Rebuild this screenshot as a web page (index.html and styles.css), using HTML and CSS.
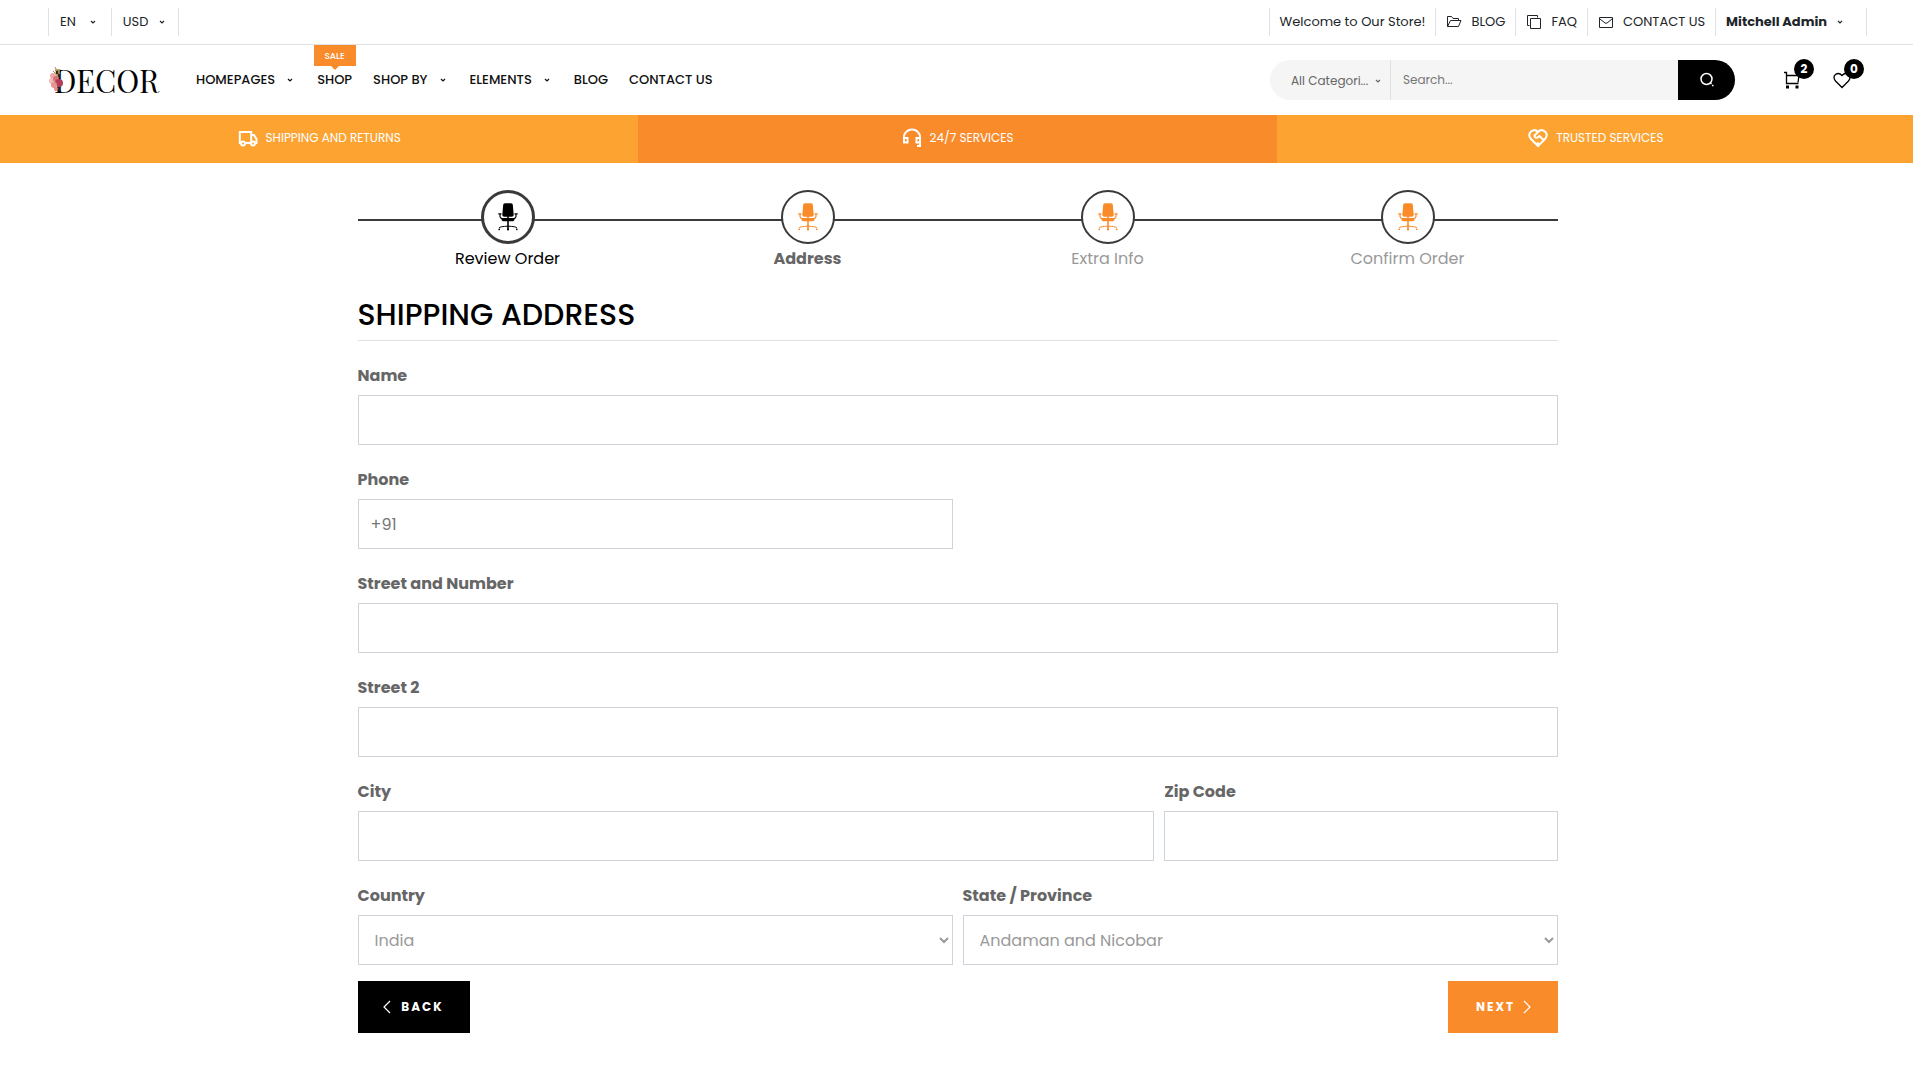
FILE: index.html
```html
<!DOCTYPE html>
<html lang="en">
<head>
<meta charset="utf-8">
<meta name="viewport" content="width=device-width, initial-scale=1">
<title>Shipping Address | Decor</title>
<link rel="stylesheet" href="styles.css">
</head>
<body>
<svg class="sprite" aria-hidden="true">
  <symbol id="caret" viewBox="0 0 6 6"><path d="M1 2l2 2 2-2" fill="none" stroke="currentColor" stroke-width="1.2"/></symbol>
  <symbol id="chair" viewBox="0 0 20 28">
    <path d="M7 .3h6q1.600 0 1.800 1.500l.9 9.900q0 2-2 2H6.300q-2 0-2-2l.9-9.900Q5.400.3 7 .3z" fill="currentColor"/>
    <path d="M3.500 15h13v1.300q0 1.900-1.700 1.900H5.200q-1.700 0-1.700-1.900z" fill="currentColor"/>
    <path d="M9.200 13h1.600v13H9.200z" fill="currentColor"/>
    <path d="M.3 10.800h3.200M16.500 10.800h3.200M2 11v2.500q.2 1.800 2 2.200M18 11v2.500q-.2 1.800-2 2.200" fill="none" stroke="currentColor" stroke-width="1.2"/>
    <path d="M1 25q1-1.600 9-1.800 8 .2 9 1.800" fill="none" stroke="currentColor" stroke-width="1"/>
    <circle cx="1.200" cy="26.300" r=".9" fill="currentColor"/><circle cx="10" cy="26.500" r="1.100" fill="currentColor"/><circle cx="18.800" cy="26.300" r=".9" fill="currentColor"/>
  </symbol>
</svg>

<header>
  <div class="topbar">
    <div class="top-group">
      <button class="top-item top-lang" type="button">EN <svg class="caret"><use href="#caret"/></svg></button>
      <button class="top-item top-currency" type="button">USD <svg class="caret"><use href="#caret"/></svg></button>
    </div>
    <div class="top-group">
      <span class="top-item">Welcome to Our Store!</span>
      <a class="top-item" href="#"><svg class="top-icon" viewBox="0 0 16 16"><path d="M1.500 12.500v-10h4l1.500 2h5.500v2M1.500 12.500l3-6h10.500l-2.500 6z"/></svg>BLOG</a>
      <a class="top-item" href="#"><svg class="top-icon" viewBox="0 0 16 16"><path d="M4.500 4.500h10v10h-10zM3.500 11.500h-2v-10h10v2"/></svg>FAQ</a>
      <a class="top-item" href="#"><svg class="top-icon" viewBox="0 0 16 16"><path d="M1.500 3.500h13v10h-13zM2 5l5 4q1 .6 2 0l5-4"/></svg>CONTACT US</a>
      <button class="top-item top-user" type="button">Mitchell Admin <svg class="caret"><use href="#caret"/></svg></button>
    </div>
  </div>

  <div class="mainbar">
    <a class="logo" href="#">DECOR
      <svg class="flowers" viewBox="0 0 15 25" aria-hidden="true">
        <path d="M6 0l2 4M11 2l-2 4M4 4l5 5" stroke="#a58a50" stroke-width="1"/>
        <path d="M6 2h5v8H7z" fill="#b39a5c" opacity=".8"/>
        <path d="M7 4h2v3H7zM9 7h2v4H9zM8 20h3v4H8z" fill="#33271d"/>
        <circle cx="4" cy="9" r="3" fill="#eda9a6"/><circle cx="3" cy="14" r="3" fill="#f1bcb8"/>
        <circle cx="7" cy="12" r="3" fill="#dc7078"/><circle cx="10" cy="16" r="4" fill="#b23f58"/>
        <circle cx="5" cy="18" r="3" fill="#e79293"/><circle cx="7" cy="22" r="2" fill="#e08a8a"/>
      </svg>
    </a>
    <nav class="nav">
      <a href="#">HOMEPAGES <svg class="caret"><use href="#caret"/></svg></a>
      <a href="#"><span class="sale">SALE</span>SHOP</a>
      <a href="#">SHOP BY <svg class="caret"><use href="#caret"/></svg></a>
      <a href="#">ELEMENTS <svg class="caret"><use href="#caret"/></svg></a>
      <a href="#">BLOG</a>
      <a href="#">CONTACT US</a>
    </nav>
    <form class="search">
      <button class="category" type="button">All Categori... <svg class="caret"><use href="#caret"/></svg></button>
      <input type="search" placeholder="Search..." aria-label="Search">
      <button class="search-button" type="button" aria-label="Search"><svg viewBox="0 0 16 16"><circle cx="7.500" cy="7" r="5.500"/><path d="M11.500 11l1 1M13 13.500h1.500"/></svg></button>
    </form>
    <div class="shop-links">
      <a href="#" aria-label="Cart"><svg viewBox="0 0 18 18"><path d="M1 1.500h2.500v11h12M3.500 4.500h12.500l-1 7"/><path class="solid" d="M3 14.500h3v3H3zM12.500 14.500h3v3h-3z"/></svg><span class="badge">2</span></a>
      <a href="#" aria-label="Wishlist"><svg viewBox="0 0 18 18"><path d="M9 16.500L2.500 10Q-.5 6 2.500 3.500 6 1 9 4.500 12 1 15.500 3.500 18.500 6 15.500 10z"/></svg><span class="badge">0</span></a>
    </div>
  </div>

  <div class="services">
    <div class="service"><svg viewBox="0 0 20 20"><path d="M3.500 15H1.800V4h11.400v11H7M13 7h3l2.500 4v4H17M13.300 15H12"/><circle cx="5" cy="15.500" r="2"/><circle cx="15" cy="15.500" r="2"/></svg>SHIPPING AND RETURNS</div>
    <div class="service service-dark"><svg viewBox="0 0 20 20"><path d="M2 14.500V9a8 7.500 0 0 1 16 0v5.500M2 10h3.500v4.500H2zM14.500 10H18v4.500h-3.500zM18 14.500V18h-3"/></svg>24/7 SERVICES</div>
    <div class="service"><svg viewBox="0 0 20 20"><path d="M10 18L3 11Q-.5 7 3 3.500 7 .5 10 4q3-3.500 7-.5 3.500 3.500 0 7.500zM10 4L6.500 7.500q0 3 3 2l2-1.500 4 4M9 14.500l1.500 1.500"/></svg>TRUSTED SERVICES</div>
  </div>
</header>

<main class="checkout">
  <ol class="steps">
    <li class="step done"><span class="dot"><svg><use href="#chair"/></svg></span>Review Order</li>
    <li class="step current"><span class="dot"><svg><use href="#chair"/></svg></span>Address</li>
    <li class="step"><span class="dot"><svg><use href="#chair"/></svg></span>Extra Info</li>
    <li class="step"><span class="dot"><svg><use href="#chair"/></svg></span>Confirm Order</li>
  </ol>
  <h1>SHIPPING ADDRESS</h1>
  <form>
    <div class="address">
      <div class="field full"><label for="name">Name</label><input id="name" type="text"></div>
      <div class="field half"><label for="phone">Phone</label><input id="phone" type="tel" placeholder="+91"></div>
      <div class="field full"><label for="street">Street and Number</label><input id="street" type="text"></div>
      <div class="field full"><label for="street2">Street 2</label><input id="street2" type="text"></div>
      <div class="field city"><label for="city">City</label><input id="city" type="text"></div>
      <div class="field zip"><label for="zip">Zip Code</label><input id="zip" type="text"></div>
      <div class="field half"><label for="country">Country</label><select id="country"><option>India</option></select></div>
      <div class="field half"><label for="state">State / Province</label><select id="state"><option>Andaman and Nicobar</option></select></div>
    </div>
    <div class="actions">
      <button class="back" type="button"><svg viewBox="0 0 8 14"><path d="M7 1L1 7l6 6"/></svg>BACK</button>
      <button class="next" type="button">NEXT<svg viewBox="0 0 8 14"><path d="M1 1l6 6-6 6"/></svg></button>
    </div>
  </form>
</main>
</body>
</html>
```
FILE: styles.css
```css
* { box-sizing: border-box; }
body { margin: 0; overflow-x: hidden; background: #fff; color: #212529; font: 16px/24px Poppins, Inter, sans-serif; }
a { color: inherit; text-decoration: none; }
button, input, select { margin: 0; border: 0; border-radius: 0; background: none; color: inherit; font: inherit; }
svg { flex: none; fill: none; stroke: currentColor; }
.sprite { display: none; }
.caret { width: 6px; height: 6px; stroke: none; }

.topbar { display: flex; justify-content: space-between; height: 45px; padding: 8px 46px 0 48px; border-bottom: 1px solid #dee2e6; font-size: 13px; line-height: 20px; }
.top-group { display: flex; height: 28px; }
.top-item { display: flex; align-items: center; padding: 0 10px; border-left: 1px solid #dee2e6; white-space: nowrap; }
.top-group > :last-child { border-right: 1px solid #dee2e6; }
.top-icon { width: 16px; height: 16px; margin-right: 9px; }
.top-lang { gap: 14px; padding: 0 15px 0 11px; }
.top-currency { gap: 11px; padding: 0 13px 0 11px; }
.top-user { gap: 10px; padding-right: 23px; font-weight: 700; }

.mainbar { display: flex; align-items: center; height: 70px; padding: 0 46px 0 48px; }
.logo { position: relative; width: 148px; padding-left: 6px; color: #000; font: 31px/40px "Playfair Display", "Liberation Serif", serif; }
.flowers { position: absolute; left: 1px; top: 7px; width: 15px; height: 25px; stroke: none; }
.nav { display: flex; gap: 21px; color: #111; font-size: 13px; font-weight: 500; line-height: 20px; white-space: nowrap; }
.nav a { position: relative; display: flex; align-items: center; gap: 12px; }
.nav a:has(.caret) { padding-right: 3px; }
.sale { position: absolute; left: 50%; bottom: 24px; width: 42px; height: 21px; margin-left: -21px; background: #f98b2b; color: #fff; font-size: 9px; line-height: 22px; text-align: center; }
.sale::after { content: ""; position: absolute; left: 17px; top: 21px; border: 4px solid transparent; border-top-color: #f98b2b; border-bottom: 0; }
.search { display: flex; width: 465px; height: 40px; margin-left: auto; overflow: hidden; border-radius: 20px; background: #f5f5f5; color: #666; font-size: 12px; line-height: 20px; }
.category { display: flex; align-items: center; justify-content: space-between; width: 121px; padding: 1px 9px 0 21px; border-right: 1px solid #dee2e6; white-space: nowrap; }
.search input { flex: 1; min-width: 0; padding: 0 12px; outline: 0; }
.search input::placeholder { color: #777; opacity: 1; }
.search-button { display: flex; align-items: center; justify-content: center; width: 57px; background: #000; color: #fff; }
.search-button svg { width: 16px; height: 16px; stroke-width: 1.5; }
.shop-links { display: flex; gap: 32px; margin: 0 16px 0 48px; }
.shop-links a { position: relative; display: flex; color: #000; }
.shop-links svg { width: 18px; height: 18px; stroke-width: 1.3; }
.solid { fill: currentColor; stroke: none; }
.badge { position: absolute; left: 11px; top: -12px; width: 20px; height: 20px; border-radius: 50%; background: #000; color: #fff; font-size: 12px; font-weight: 700; line-height: 20px; text-align: center; }

.services { display: grid; grid-template-columns: repeat(3, 1fr); margin-right: -2px; }
.service { display: flex; align-items: center; justify-content: center; gap: 8px; height: 48px; padding-bottom: 2px; background: #fca331; color: #fff; font-size: 12px; line-height: 20px; }
.service-dark { background: #f98b2b; }
.service svg { width: 20px; height: 20px; stroke-width: 2; }

.checkout { width: 100%; max-width: 1202px; margin: 0 auto; padding: 27px 0 40px 2px; }
.steps { display: grid; grid-template-columns: repeat(4, 1fr); margin: 0; padding: 0; list-style: none; background: linear-gradient(#3a3a3a, #3a3a3a) 0 29px / 100% 2px no-repeat; }
.step { display: flex; flex-direction: column; align-items: center; gap: 3px; color: #999; }
.dot { display: flex; align-items: center; justify-content: center; width: 54px; height: 54px; border: 2px solid #3a3a3a; border-radius: 50%; background: #fff; color: #f98b2b; }
.dot svg { width: 20px; height: 28px; stroke: none; }
.done { color: #000; }
.done .dot { border-width: 3px; color: #000; }
.current { color: #666; font-weight: 700; }
h1 { margin: 21px 0 22px; padding: 5px 0 7px; border-bottom: 1px solid #dee2e6; color: #000; font-size: 30px; font-weight: 500; line-height: 36px; }
.address { display: grid; grid-template-columns: repeat(12, 1fr); gap: 22px 10px; }
.field { display: flex; flex-direction: column; gap: 6px; }
.full { grid-column: 1 / -1; }
.half { grid-column: span 6; }
.city { grid-column: span 8; }
.zip { grid-column: span 4; }
.field label { color: #666; font-weight: 700; line-height: 26px; }
.field input, .field select { width: 100%; height: 50px; padding: 0 12px; border: 1px solid #ced4da; background: #fff; color: #999; }
.field select { padding-right: 0; }
.field input::placeholder { color: #777; opacity: 1; }
.actions { display: flex; justify-content: space-between; margin-top: 16px; }
.actions button { display: flex; align-items: center; justify-content: center; gap: 10px; width: 112px; height: 52px; color: #fff; font-size: 12px; font-weight: 700; letter-spacing: 2px; }
.back { background: #000; }
.actions .next { gap: 8px; width: 110px; padding-right: 4px; background: #f98b2b; }
.actions svg { width: 8px; height: 14px; stroke-width: 1.2; }
```
